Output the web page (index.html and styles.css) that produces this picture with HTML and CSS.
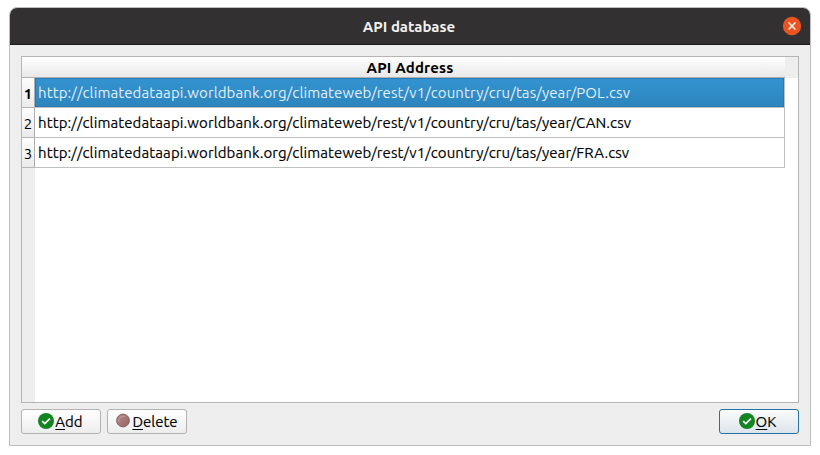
FILE: index.html
```html
<!DOCTYPE html>
<html lang="en">
<head>
<meta charset="utf-8">
<title>API database</title>
<link rel="stylesheet" href="styles.css">
</head>
<body>
<main class="window">
  <header class="titlebar">
    <h1 class="title">API database</h1>
    <button class="close" aria-label="Close"><svg viewBox="0 0 20 20"><circle cx="10" cy="10" r="9.2"/><path d="M6.6 6.6l6.8 6.8M13.4 6.6l-6.8 6.8"/></svg></button>
  </header>
  <section class="content">
    <div class="grid">
      <div class="head"><div class="column"><span class="column-label">API Address</span></div></div>
      <div class="row selected"><div class="index">1</div><div class="cell"><span class="url">http://climatedataapi.worldbank.org/climateweb/rest/v1/country/cru/tas/year/POL.csv</span></div></div>
      <div class="row"><div class="index">2</div><div class="cell"><span class="url">http://climatedataapi.worldbank.org/climateweb/rest/v1/country/cru/tas/year/CAN.csv</span></div></div>
      <div class="row"><div class="index">3</div><div class="cell"><span class="url">http://climatedataapi.worldbank.org/climateweb/rest/v1/country/cru/tas/year/FRA.csv</span></div></div>
      <div class="gutter"></div>
    </div>
    <footer class="actions">
      <button class="button"><svg class="icon" viewBox="0 0 16 16"><circle cx="8" cy="8" r="8" fill="#128422"/><path class="check" d="M4.2 8.1l2.6 2.5 5.1-5"/></svg><span class="add"><u>A</u>dd</span></button>
      <button class="button"><svg class="icon" viewBox="0 0 16 16"><defs><linearGradient id="dot" x1="0" y1="0" x2="1" y2="1"><stop stop-color="#b98a8a"/><stop offset="1" stop-color="#946363"/></linearGradient></defs><circle cx="8" cy="7.5" r="6.4" fill="url(#dot)" stroke="#806565" stroke-width="1"/><path d="M3.8 9.5A5 5 0 0 1 9.8 3.5" fill="none" stroke="#c59d9d"/></svg><span class="delete"><u>D</u>elete</span></button>
      <button class="button default"><svg class="icon" viewBox="0 0 16 16"><circle cx="8" cy="8" r="8" fill="#128422"/><path class="check" d="M4.2 8.1l2.6 2.5 5.1-5"/></svg><span class="ok"><u>O</u>K</span></button>
    </footer>
  </section>
</main>
</body>
</html>
```
FILE: styles.css
```css
* { box-sizing: border-box; }
body {
  margin: 0;
  padding: 7px 9px 9px;
  height: 455px;
  overflow: hidden;
  background: #fff;
  color: #000;
  font: 15px/20px "Ubuntu", "Noto Sans", sans-serif;
}
button { font: inherit; color: inherit; }
.window {
  display: flex;
  flex-direction: column;
  height: 439px;
  border: 1px solid #bdbdbd;
  border-radius: 8px 8px 0 0;
  background: #eee;
  overflow: hidden;
}
.titlebar {
  display: grid;
  grid-template-columns: 1fr auto 1fr;
  align-items: center;
  height: 37px;
  padding: 0 8px;
  background: #323030;
  border-bottom: 1px solid #1d1b1b;
}
.title {
  grid-column: 2;
  margin: 0;
  padding: 1px 2px 0 0;
  color: #f2f1f0;
  font-size: 15px;
  font-weight: 700;
}
.close {
  justify-self: end;
  width: 20px;
  height: 20px;
  padding: 0;
  border: 0;
  background: none;
}
.close svg { display: block; }
.close circle { fill: #e95420; }
.close path { stroke: #fff; stroke-width: 1.4; fill: none; }
.content { padding: 11px; }
.grid {
  display: flex;
  flex-direction: column;
  height: 347px;
  border: 1px solid #b5b5b5;
  background: #fff;
}
.head { height: 21px; background: #eee; }
.column {
  width: 763px;
  height: 21px;
  text-align: center;
  font-weight: 700;
  letter-spacing: 0.15px;
  line-height: 22px;
  border-bottom: 1px solid #b0b0b0;
  background: linear-gradient(#fff, #e8e8e8);
}
.column-label { margin-left: 13px; }
.row {
  display: grid;
  grid-template-columns: 13px 750px;
  grid-template-rows: 30px;
  height: 30px;
}
.index {
  border-right: 1px solid #adadad;
  border-bottom: 1px solid #b5b5b5;
  background: linear-gradient(#fdfdfd, #ebebeb);
  text-align: center;
  line-height: 32px;
}
.cell {
  padding-left: 3px;
  border-right: 1px solid #c0c0c0;
  border-bottom: 1px solid #c0c0c0;
  line-height: 29px;
  letter-spacing: 0.108px;
  white-space: nowrap;
}
.url, .button span { -webkit-text-stroke: 0.15px currentColor; }
.selected .index { font-weight: 700; }
.selected .cell {
  color: #e4eff7;
  background: linear-gradient(#3394d1, #2c85bd) padding-box;
  box-shadow: inset 0 0 0 1px #287cb2;
}
.selected .url { -webkit-text-stroke: 0; }
.gutter { flex: 1; width: 13px; background: #eee; }
.actions {
  display: flex;
  gap: 6px;
  margin-top: 6px;
}
.button {
  display: flex;
  align-items: center;
  justify-content: center;
  gap: 1px;
  width: 80px;
  height: 25px;
  padding: 0 1px 0 0;
  border: 1px solid #b2b2b2;
  border-radius: 3px;
  background: linear-gradient(#fff, #ededed);
  line-height: 25px;
}
.default {
  margin-left: auto;
  padding-right: 3px;
  border-color: #2472a3;
  background: linear-gradient(#fbfcfd, #dce4eb);
}
.icon { width: 16px; height: 16px; margin-top: -1px; }
.check { fill: none; stroke: #fff; stroke-width: 1.7; }
.button u { text-underline-offset: 2px; text-decoration-thickness: 1px; text-decoration-skip-ink: none; }
```
